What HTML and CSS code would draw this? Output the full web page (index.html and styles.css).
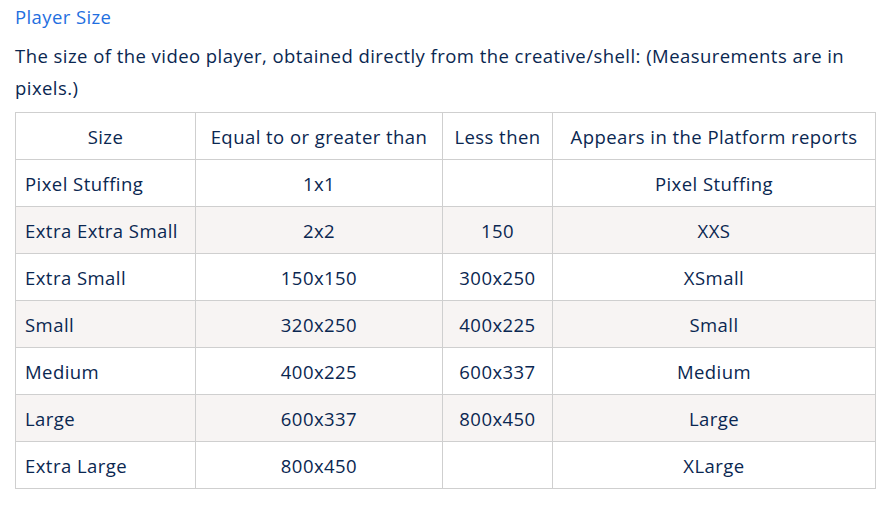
FILE: index.html
```html
<!DOCTYPE html>
<html>
<head>
<meta charset="utf-8">
<link rel="stylesheet" href="styles.css">
</head>
<body>
<div class="page">
  <h3 class="title">Player Size</h3>
  <p class="desc">The size of the video player, obtained directly from the creative/shell: (Measurements are in pixels.)</p>
  <table class="sizes">
    <colgroup>
      <col class="c1"><col class="c2"><col class="c3"><col class="c4">
    </colgroup>
    <thead>
      <tr><th>Size</th><th>Equal to or greater than</th><th>Less then</th><th>Appears in the Platform reports</th></tr>
    </thead>
    <tbody>
      <tr><td>Pixel Stuffing</td><td class="ctr">1x1</td><td class="ctr"></td><td class="ctr">Pixel Stuffing</td></tr>
      <tr><td>Extra Extra Small</td><td class="ctr">2x2</td><td class="ctr">150</td><td class="ctr">XXS</td></tr>
      <tr><td>Extra Small</td><td class="ctr">150x150</td><td class="ctr">300x250</td><td class="ctr">XSmall</td></tr>
      <tr><td>Small</td><td class="ctr">320x250</td><td class="ctr">400x225</td><td class="ctr">Small</td></tr>
      <tr><td>Medium</td><td class="ctr">400x225</td><td class="ctr">600x337</td><td class="ctr">Medium</td></tr>
      <tr><td>Large</td><td class="ctr">600x337</td><td class="ctr">800x450</td><td class="ctr">Large</td></tr>
      <tr><td>Extra Large</td><td class="ctr">800x450</td><td class="ctr"></td><td class="ctr">XLarge</td></tr>
    </tbody>
  </table>
</div>
</body>
</html>
```
FILE: styles.css
```css
html, body {
  margin: 0;
  padding: 0;
  background: #ffffff;
}
body {
  font-family: "Open Sans", "Noto Sans", sans-serif;
  color: #0a2751;
}
.page {
  padding: 4px 15px 0 15px;
}
.title {
  margin: 0;
  font-size: 18.5px;
  font-weight: 400;
  line-height: 26px;
  color: #1f6fe0;
  letter-spacing: 0.4px;
}
.desc {
  margin: 10px 0 8px 0;
  font-size: 18.5px;
  line-height: 32px;
  letter-spacing: 0.45px;
}
.sizes {
  border-collapse: collapse;
  width: 860px;
  table-layout: fixed;
  font-size: 18.5px;
  letter-spacing: 0.45px;
}
.c1 { width: 180px; }
.c2 { width: 247px; }
.c3 { width: 110px; }
.c4 { width: 323px; }
.sizes th, .sizes td {
  border: 1px solid #cfcfcf;
  height: 47px;
  padding: 0 9px;
  box-sizing: border-box;
  font-weight: 400;
  text-align: left;
  white-space: nowrap;
}
.sizes th {
  text-align: center;
}
.sizes td.ctr {
  text-align: center;
}
.sizes tbody tr:nth-child(even) td {
  background: #f7f4f3;
}
```
